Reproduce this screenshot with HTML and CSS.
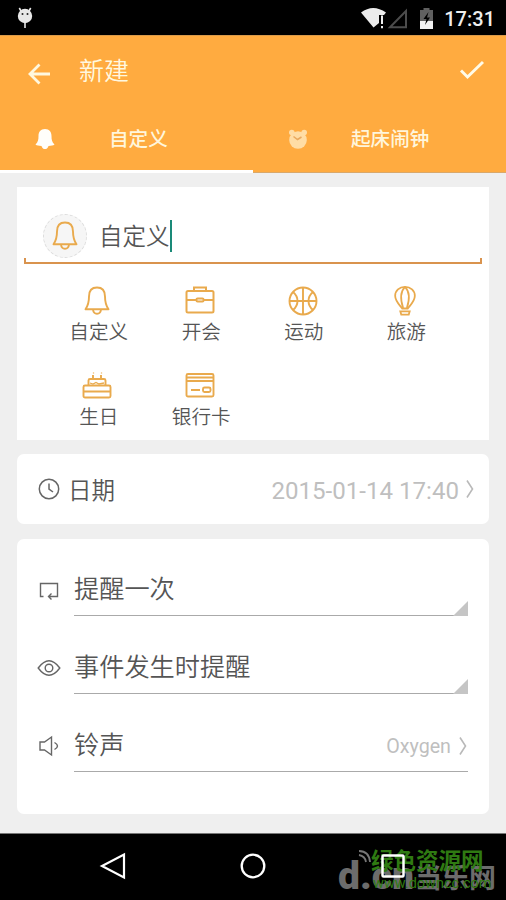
FILE: index.html
```html
<!DOCTYPE html>
<html lang="zh-CN">
<head>
<meta charset="utf-8">
<title>新建</title>
<link rel="stylesheet" href="styles.css">
</head>
<body>
<div class="screen">
  <div class="status">
    <svg class="android" width="18" height="24" viewBox="0 0 18 24"><circle cx="9" cy="11" r="7.2" fill="#e8e8e8"/><path d="M5 6 3.300 3M13 6l1.700-3M9 17v6" stroke="#e8e8e8" stroke-width="1.600"/><circle cx="6.500" cy="9" r="1" fill="#222"/><circle cx="11.500" cy="9" r="1" fill="#222"/></svg>
    <div class="status-right">
      <svg width="80" height="24" viewBox="0 0 80 24"><path d="M1 7.500Q13-1.500 26 7.500L24 10h-5v8L13.500 22.500z" fill="#ececec"/><path d="M22 10.500v8.500M22 21v2.300" stroke="#eee" stroke-width="2"/><path d="M30 22.200h16V6z" fill="none" stroke="#4c4c4c" stroke-width="2"/><path d="M60 5h3.500V3h6v2H73v19H60z" fill="#606060"/><path d="M60 16h13v8H60z" fill="#f2f2f2"/><path d="m68.500 7-5 7h3l-1.500 6 5-7.500h-3z" fill="#000"/></svg>
      <span class="time">17:31</span>
    </div>
  </div>
  <header class="header">
    <div class="toolbar">
      <svg class="back" width="24" height="24" viewBox="0 0 24 24"><path d="M23 12H3M12.500 2.500 3 12l9.500 9.500" fill="none" stroke="#fff8df" stroke-width="2.800"/></svg>
      <h1>新建</h1>
      <svg class="check" width="26" height="20" viewBox="0 0 26 20"><path d="m2 10.500 6.500 6.500L24 2" fill="none" stroke="#fffbe8" stroke-width="2.900"/></svg>
    </div>
    <div class="tabs">
      <div class="tab active">
        <svg width="20" height="22" viewBox="0 0 20 22"><path d="M10 1C5.500 1 3.500 4 3.500 8c0 4-.5 6-3 8.500 1.500 1 3 1.300 6 1.400C7 20 8.300 21 10 21s3-1 3.500-3.100c3-.1 4.500-.4 6-1.400-2.500-2.500-3-4.500-3-8.500 0-4-2-7-6.500-7z" fill="#fffefa"/></svg>
        <span>自定义</span>
      </div>
      <div class="tab alarm">
        <svg width="20" height="20" viewBox="0 0 20 20"><g fill="#ffdda5"><circle cx="10" cy="11" r="8.800"/><circle cx="3.800" cy="3.500" r="2.800"/><circle cx="16.200" cy="3.500" r="2.800"/></g><path d="m5.500 7.500 4 3 4-2.500" fill="none" stroke="#e9a95f" stroke-width="1.500"/></svg>
        <span>起床闹钟</span>
      </div>
    </div>
  </header>
  <main>
    <section class="card types">
      <div class="name-row">
        <div class="badge"><svg width="28" height="30" viewBox="0 0 28 30"><use href="#bell"/></svg></div>
        <span class="name">自定义</span><i class="caret"></i>
      </div>
      <div class="underline"></div>
      <div class="grid">
        <div class="type"><svg width="28" height="30" viewBox="0 0 28 30"><g id="bell" fill="none" stroke="#e9aa4d" stroke-width="1.900" stroke-linejoin="round"><path d="M14 1.500c-5.300 0-8 3.700-8 9 0 6-.8 9-3.500 12.700h23C22.800 19.500 22 16.500 22 10.500c0-5.300-2.700-9-8-9z"/><path d="M10 23.500c.3 2.800 1.800 4.200 4 4.200s3.700-1.400 4-4.200"/></g></svg><span>自定义</span></div>
        <div class="type"><svg width="30" height="30" viewBox="0 0 30 30"><g fill="none" stroke="#e9aa4d" stroke-width="2"><rect x="1.500" y="5" width="27" height="21.500" rx="1.500"/><path d="M9 5V1.500h12V5M1.500 14h10M18.500 14h10"/><rect x="11.500" y="12.500" width="7" height="3" rx="1"/></g></svg><span>开会</span></div>
        <div class="type shift"><svg width="30" height="30" viewBox="0 0 30 30"><g fill="none" stroke="#e9aa4d" stroke-width="1.900"><circle cx="15" cy="15" r="13.500"/><path d="M15 1.500v27M1.500 15h27M5 6c6 5 6 13 0 18M25 6c-6 5-6 13 0 18"/></g></svg><span>运动</span></div>
        <div class="type"><svg width="30" height="30" viewBox="0 0 30 32"><g fill="none" stroke="#e9aa4d" stroke-width="1.900"><path d="M15 1C9 1 4.500 5 4.500 10.500c0 5.500 4 9 7.500 13.500h6c3.500-4.500 7.500-8 7.500-13.500C25.500 5 21 1 15 1z"/><path d="M15 1c-6 6-4.500 15-2 22.500M15 1c6 6 4.500 15 2 22.500M10 27h10l-1 3.500h-8z"/></g></svg><span>旅游</span></div>
        <div class="type"><svg width="30" height="30" viewBox="0 0 30 30"><g fill="none" stroke="#e9aa4d" stroke-width="1.900"><rect x="1.500" y="14.500" width="27" height="12" rx="1.500"/><path d="M2 20.500h26M6.500 14.500v-5q0-1.500 1.500-1.500h14q1.500 0 1.500 1.500v5M11 8V4M19 8V4"/><path d="M11.500 1.500v1M19.500 1.500v1M8 12l3 1 3-1.500 3 1.500 5-1" stroke-width="1.300"/></g></svg><span>生日</span></div>
        <div class="type"><svg width="30" height="30" viewBox="0 0 30 30"><g fill="none" stroke="#e9aa4d" stroke-width="1.900"><rect x="1.500" y="3" width="27" height="22.500" rx="1.500"/><path d="M2 6.500h26M2 10h26M6 19h9"/><rect x="18" y="16.500" width="7.500" height="4.500" rx="1.500"/></g></svg><span>银行卡</span></div>
      </div>
    </section>
    <section class="card date">
      <svg width="22" height="22" viewBox="0 0 22 22"><g fill="none" stroke="#666" stroke-width="1.500"><circle cx="11" cy="11" r="9.700"/><path d="M11 5.500v5.500l4 3"/></g></svg>
      <span class="label">日期</span>
      <span class="value">2015-01-14 17:40</span>
      <svg class="chev" width="10" height="20" viewBox="0 0 10 20"><path d="m2 1.500 5.500 8.500L2 18.500" fill="none" stroke="#b9b9b9" stroke-width="1.600"/></svg>
    </section>
    <section class="card options">
      <div class="option">
        <svg class="icon" width="24" height="24" viewBox="0 0 24 24"><path d="M6.500 18.500h-3v-13h17v13h-8M14.500 15.500l-3 3 3 3" fill="none" stroke="#666" stroke-width="1.400"/></svg>
        <div class="field"><span>提醒一次</span><i class="corner"></i></div>
      </div>
      <div class="option">
        <svg class="icon" width="24" height="24" viewBox="0 0 24 24"><g fill="none" stroke="#666" stroke-width="1.400"><path d="M1.200 12Q12-2.500 22.800 12 12 26.500 1.200 12z"/><circle cx="12" cy="12" r="3.800"/></g></svg>
        <div class="field"><span>事件发生时提醒</span><i class="corner"></i></div>
      </div>
      <div class="option">
        <svg class="icon" width="24" height="24" viewBox="0 0 24 24"><path d="M3 8h4.500L14.500 3v18l-7-5H3zM17.500 8.500q6 3.500 0 7" fill="none" stroke="#666" stroke-width="1.400"/></svg>
        <div class="field"><span>铃声</span><span class="sound">Oxygen</span><svg class="chev" width="10" height="20" viewBox="0 0 10 20"><path d="m2 1.500 5.500 8.500L2 18.500" fill="none" stroke="#b9b9b9" stroke-width="1.600"/></svg></div>
      </div>
    </section>
  </main>
  <nav class="navbar">
    <svg width="28" height="28" viewBox="0 0 28 28"><path d="M25 2.500v23L3 14z" fill="none" stroke="#fff" stroke-width="2.200"/></svg>
    <svg width="28" height="28" viewBox="0 0 28 28"><circle cx="14" cy="14" r="11.300" fill="none" stroke="#fff" stroke-width="2.300"/></svg>
    <svg class="recent" width="28" height="28" viewBox="0 0 28 28"><rect x="3.500" y="3.500" width="21" height="21" rx="1" fill="none" stroke="#fff" stroke-width="2.500"/></svg>
    <div class="mark-gray"><svg width="14" height="14" viewBox="0 0 14 14"><path d="M1 2q10 0 11 11M1 6q6 1 7 7" fill="none" stroke="#777" stroke-width="1.800"/></svg><b>d.cn</b><span>当乐网</span></div>
    <div class="mark-green"><b>绿色资源网</b><span>www.downcc.com</span></div>
  </nav>
</div>
</body>
</html>
```
FILE: styles.css
```css
* { box-sizing: border-box; }
body { margin: 0; background: #000; font-family: Roboto, "Noto Sans CJK SC", sans-serif; }
svg { display: block; flex: none; }
.screen { width: 506px; height: 900px; display: flex; flex-direction: column; overflow: hidden; }
.status { height: 35px; flex: none; background: #000; display: flex; justify-content: space-between; padding: 5px 11px 0 16px; }
.status-right { display: flex; }
.time { width: 53px; margin-left: 2px; color: #eee; font-size: 20px; font-weight: 500; line-height: 28px; text-align: right; white-space: nowrap; }
.header { height: 138px; flex: none; background: #ffab40; border-top: 1px solid #d99a4a; display: flex; flex-direction: column; }
.toolbar { height: 69px; display: flex; padding: 0 21px 0 27px; }
.back { margin-top: 26px; }
.toolbar h1 { flex: 1; margin: 0 0 0 28px; font-size: 25px; line-height: 36px; padding-top: 18px; font-weight: 350; color: #fff8df; }
.check { margin-top: 24px; }
.tabs { flex: 1; display: grid; grid-template-columns: 253px 253px; }
.tab { display: flex; align-items: center; padding-left: 35px; border-bottom: 1px solid #d9a86a; }
.tab.active { border-bottom: 3px solid #fff; padding-top: 2px; }
.tab span { color: #fff6dc; font-size: 19.600px; font-weight: 500; line-height: 28px; margin-left: 54px; padding-top: 3px; }
.tab.alarm span { margin-left: 43px; }
main { height: 660px; flex: none; background: #efefef; padding: 14px 17px 0; display: flex; flex-direction: column; gap: 15px; }
.card { background: #fff; border-radius: 7px; color: #555; }
.types { height: 253px; border-radius: 0; padding: 26px 8px 0; flex: none; }
.name-row { display: flex; align-items: center; height: 45px; padding-left: 18px; }
.badge { width: 44px; height: 44px; border-radius: 50%; border: 1px dashed #ddd; background: #f6f6f6; display: flex; align-items: center; justify-content: center; padding-top: 1px; }
.name { font-size: 23.500px; font-weight: 350; margin-left: 12px; line-height: 34px; padding-top: 3px; }
.caret { width: 2px; height: 32px; background: #1a8a78; }
.underline { height: 6px; margin: 0 -1px; border: solid #d9934e; border-width: 0 2px 2px; }
.grid { display: grid; grid-template-columns: repeat(4, 102.500px); grid-auto-rows: 84.500px; padding: 22px 0 0 22px; }
.type { display: flex; flex-direction: column; align-items: center; }
.type svg { height: 30px; margin-right: 2px; }
.type.shift svg { margin-right: 1px; }
.type span { font-size: 19.600px; line-height: 28px; margin-top: 3px; font-weight: 350; padding-left: 1px; }
.date { height: 70px; margin-top: -1px; display: flex; align-items: center; padding: 0 14px 0 21px; flex: none; }
.label { font-size: 23.500px; font-weight: 350; margin-left: 8px; line-height: 34px; padding-top: 4px; }
.value { margin-left: auto; color: #bfbfbf; font-size: 24.100px; line-height: 30px; padding-top: 3px; font-weight: 400; white-space: nowrap; }
.date .chev { margin-left: 6px; }
.options { height: 275px; padding: 29px 21px 0 20px; flex: none; }
.option { display: flex; height: 78px; }
.icon { margin-top: 10px; }
.field { flex: 1; height: 48px; margin-left: 13px; border-bottom: 1px solid #aaa; display: flex; position: relative; font-size: 25.200px; font-weight: 350; line-height: 44px; }
.corner { position: absolute; right: 0; bottom: -1px; width: 15px; height: 15px; background: #c5c5c5; clip-path: polygon(100% 0, 100% 100%, 0 100%); }
.sound { margin-left: auto; color: #bfbfbf; font-size: 19.700px; font-weight: 400; line-height: 46px; }
.field .chev { margin: 12px 0 0 7px; }
.navbar { flex: 1; background: #000; border-top: 1px solid #777; position: relative; display: flex; justify-content: center; gap: 112px; padding-top: 18px; }
.recent { position: relative; z-index: 1; }
.mark-gray { position: absolute; left: 338px; top: 15px; width: 160px; height: 52px; color: #6c6c6c; white-space: nowrap; }
.mark-gray svg { position: absolute; left: 20px; top: 0; }
.mark-gray b { position: absolute; left: 0; top: 5px; font: 900 39px/44px Roboto, sans-serif; }
.mark-gray span { position: absolute; left: 77px; top: 14px; font-size: 27px; line-height: 33px; font-weight: 700; }
.mark-green { position: absolute; left: 371px; top: 13px; color: #2f7a12; display: flex; flex-direction: column; white-space: nowrap; }
.mark-green b { font-size: 22.500px; line-height: 28px; font-weight: 700; }
.mark-green span { font-size: 14.500px; line-height: 17px; margin-left: 2px; }
```
